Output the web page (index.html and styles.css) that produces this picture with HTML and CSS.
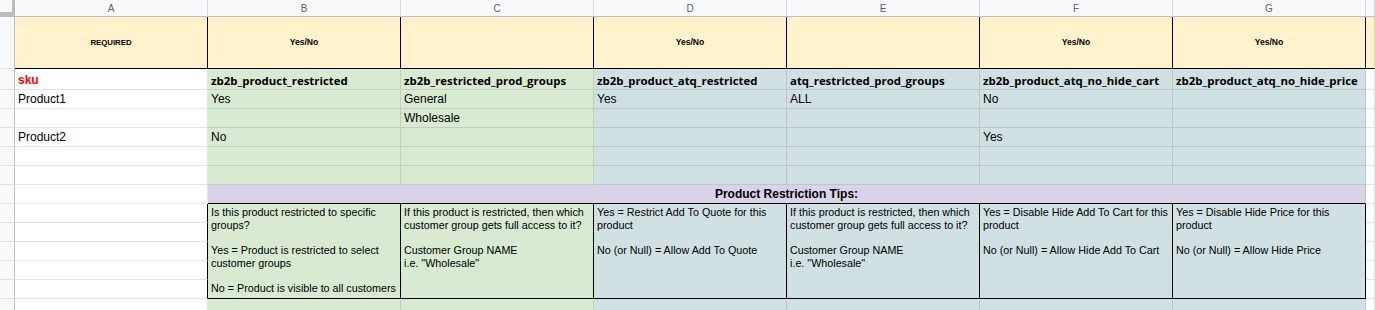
FILE: index.html
```html
<!DOCTYPE html>
<html>
<head>
<meta charset="utf-8">
<link rel="stylesheet" href="styles.css">
</head>
<body>
<div class="sheet">
  <!-- column header row -->
  <div class="corner"></div>
  <div class="colhead">A</div>
  <div class="colhead">B</div>
  <div class="colhead">C</div>
  <div class="colhead">D</div>
  <div class="colhead">E</div>
  <div class="colhead">F</div>
  <div class="colhead">G</div>
  <div class="colhead"></div>

  <!-- row 1 -->
  <div class="rowhead"></div>
  <div class="c yellow top-a">REQUIRED</div>
  <div class="c yellow top yn">Yes/No</div>
  <div class="c yellow top"></div>
  <div class="c yellow top yn">Yes/No</div>
  <div class="c yellow top"></div>
  <div class="c yellow top yn">Yes/No</div>
  <div class="c yellow top yn">Yes/No</div>
  <div class="c yellow top-h"></div>

  <!-- row 2 -->
  <div class="rowhead"></div>
  <div class="c sku">sku</div>
  <div class="c green field">zb2b_product_restricted</div>
  <div class="c green field">zb2b_restricted_prod_groups</div>
  <div class="c blue field">zb2b_product_atq_restricted</div>
  <div class="c blue field">atq_restricted_prod_groups</div>
  <div class="c blue field">zb2b_product_atq_no_hide_cart</div>
  <div class="c blue field">zb2b_product_atq_no_hide_price</div>
  <div class="c"></div>

  <!-- row 3 -->
  <div class="rowhead"></div>
  <div class="c">Product1</div>
  <div class="c green">Yes</div>
  <div class="c green">General</div>
  <div class="c blue">Yes</div>
  <div class="c blue">ALL</div>
  <div class="c blue">No</div>
  <div class="c blue"></div>
  <div class="c"></div>

  <!-- row 4 -->
  <div class="rowhead"></div>
  <div class="c"></div>
  <div class="c green"></div>
  <div class="c green">Wholesale</div>
  <div class="c blue"></div>
  <div class="c blue"></div>
  <div class="c blue"></div>
  <div class="c blue"></div>
  <div class="c"></div>

  <!-- row 5 -->
  <div class="rowhead"></div>
  <div class="c">Product2</div>
  <div class="c green">No</div>
  <div class="c green"></div>
  <div class="c blue"></div>
  <div class="c blue"></div>
  <div class="c blue">Yes</div>
  <div class="c blue"></div>
  <div class="c"></div>

  <!-- row 6 -->
  <div class="rowhead"></div>
  <div class="c"></div>
  <div class="c green"></div>
  <div class="c green"></div>
  <div class="c blue"></div>
  <div class="c blue"></div>
  <div class="c blue"></div>
  <div class="c blue"></div>
  <div class="c"></div>

  <!-- row 7 -->
  <div class="rowhead"></div>
  <div class="c"></div>
  <div class="c green"></div>
  <div class="c green"></div>
  <div class="c blue"></div>
  <div class="c blue"></div>
  <div class="c blue"></div>
  <div class="c blue"></div>
  <div class="c"></div>

  <!-- row 8 -->
  <div class="rowhead"></div>
  <div class="c"></div>
  <div class="c purple title">Product Restriction Tips:</div>
  <div class="c"></div>

  <!-- rows 9-13 -->
  <div class="rowhead"></div>
  <div class="c edge"></div>
  <div class="c green tip">Is this product restricted to specific<br>groups?<br><br>Yes = Product is restricted to select<br>customer groups<br><br>No = Product is visible to all customers</div>
  <div class="c green tip">If this product is restricted, then which<br>customer group gets full access to it?<br><br>Customer Group NAME<br>i.e. "Wholesale"</div>
  <div class="c blue tip">Yes = Restrict Add To Quote for this<br>product<br><br>No (or Null) = Allow Add To Quote</div>
  <div class="c blue tip">If this product is restricted, then which<br>customer group gets full access to it?<br><br>Customer Group NAME<br>i.e. "Wholesale"</div>
  <div class="c blue tip">Yes = Disable Hide Add To Cart for this<br>product<br><br>No (or Null) = Allow Hide Add To Cart</div>
  <div class="c blue tip">Yes = Disable Hide Price for this<br>product<br><br>No (or Null) = Allow Hide Price</div>
  <div class="c"></div>

  <div class="rowhead"></div>
  <div class="c edge"></div>
  <div class="c"></div>
  <div class="rowhead"></div>
  <div class="c edge"></div>
  <div class="c"></div>
  <div class="rowhead"></div>
  <div class="c edge"></div>
  <div class="c"></div>
  <div class="rowhead"></div>
  <div class="c edge"></div>
  <div class="c"></div>

  <!-- row 14 -->
  <div class="rowhead"></div>
  <div class="c"></div>
  <div class="c green"></div>
  <div class="c green"></div>
  <div class="c blue"></div>
  <div class="c blue"></div>
  <div class="c blue"></div>
  <div class="c blue"></div>
  <div class="c"></div>
</div>
</body>
</html>
```

FILE: styles.css
```css
html, body {
  margin: 0;
  padding: 0;
  background: #ffffff;
  overflow: hidden;
}

.sheet {
  display: grid;
  grid-template-columns: 15px repeat(7, 193px) 1fr;
  grid-template-rows: 17px 52px 21px repeat(6, 19px) repeat(5, 19px) 19px;
  width: 1375px;
  font-family: "Liberation Sans", Arial, sans-serif;
  font-size: 12px;
  color: #000;
}

.sheet > div {
  box-sizing: border-box;
  min-width: 0;
}

.corner {
  background: #f8f9fa;
  border-right: 3px solid #bdbdbd;
  border-bottom: 5px solid #bdbdbd;
}

.colhead {
  background: #f8f9fa;
  border-right: 1px solid #dadcdf;
  border-bottom: 1px solid #c0c0c0;
  color: #5f6368;
  font-size: 10px;
  display: flex;
  align-items: center;
  justify-content: center;
  padding-top: 1px;
}

.rowhead {
  background: #f8f9fa;
  border-right: 1px solid #c0c0c0;
  border-bottom: 1px solid #e0e0e0;
}

.c {
  border-right: 1px solid rgba(0, 0, 0, 0.11);
  border-bottom: 1px solid rgba(0, 0, 0, 0.11);
  padding: 0 3px 1px 3px;
  display: flex;
  align-items: flex-end;
  white-space: nowrap;
  overflow: hidden;
  line-height: 15px;
}

.yellow { background: #fff2cc; }
.green { background: #d9ead3; }
.blue { background: #d0e0e3; }
.purple { background: #d9d2e9; }

.top-a,
.top,
.top-h {
  border-bottom: 1px solid #000;
  align-items: center;
  justify-content: center;
  font-weight: bold;
  font-size: 7.8px;
  padding: 0;
}
.top-a { border-right: 1px solid #000; }
.top { border-right: 1px solid #000; }
.yn { font-size: 8.6px; }

.sku {
  color: #ff0000;
  font-weight: bold;
}

.field {
  font-family: "Open Sans", sans-serif;
  font-weight: 700;
  font-size: 11.4px;
}

.title {
  grid-column: span 6;
  justify-content: center;
  font-weight: bold;
  border-bottom: 1px solid #000;
}

.edge {
  border-right: 1px solid #000;
}

.tip {
  grid-row: span 5;
  border-right: 1px solid #000;
  border-bottom: 1px solid #000;
  font-size: 10.75px;
  line-height: 12.65px;
  padding: 2px 3px 0 3px;
  display: block;
}
```
